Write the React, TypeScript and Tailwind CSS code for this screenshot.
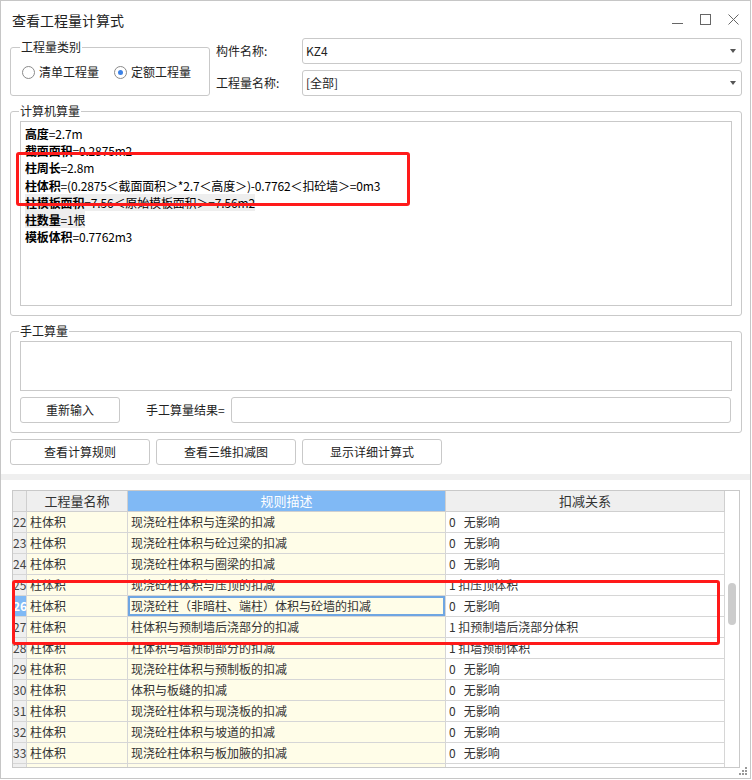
import { ReactNode } from "react";

const rows = [
  { no: 22, name: "柱体积", desc: "现浇砼柱体积与连梁的扣减", rel: "0   无影响" },
  { no: 23, name: "柱体积", desc: "现浇砼柱体积与砼过梁的扣减", rel: "0   无影响" },
  { no: 24, name: "柱体积", desc: "现浇砼柱体积与圈梁的扣减", rel: "0   无影响" },
  { no: 25, name: "柱体积", desc: "现浇砼柱体积与压顶的扣减", rel: "1 扣压顶体积" },
  { no: 26, name: "柱体积", desc: "现浇砼柱（非暗柱、端柱）体积与砼墙的扣减", rel: "0   无影响" },
  { no: 27, name: "柱体积", desc: "柱体积与预制墙后浇部分的扣减", rel: "1 扣预制墙后浇部分体积" },
  { no: 28, name: "柱体积", desc: "柱体积与墙预制部分的扣减", rel: "1 扣墙预制体积" },
  { no: 29, name: "柱体积", desc: "现浇砼柱体积与预制板的扣减", rel: "0   无影响" },
  { no: 30, name: "柱体积", desc: "体积与板缝的扣减", rel: "0   无影响" },
  { no: 31, name: "柱体积", desc: "现浇砼柱体积与现浇板的扣减", rel: "0   无影响" },
  { no: 32, name: "柱体积", desc: "现浇砼柱体积与坡道的扣减", rel: "0   无影响" },
  { no: 33, name: "柱体积", desc: "现浇砼柱体积与板加腋的扣减", rel: "0   无影响" },
];

const formulas: { label: string; value: string; shade?: boolean }[] = [
  { label: "高度", value: "=2.7m" },
  { label: "截面面积", value: "=0.2875m2" },
  { label: "柱周长", value: "=2.8m" },
  { label: "柱体积", value: "=(0.2875＜截面面积＞*2.7＜高度＞)-0.7762＜扣砼墙＞=0m3" },
  { label: "柱模板面积", value: "=7.56＜原始模板面积＞=7.56m2", shade: true },
  { label: "柱数量", value: "=1根", shade: true },
  { label: "模板体积", value: "=0.7762m3" },
];

const Select = ({ value }: { value: string }) => (
  <div className="w-[440px] h-[26px] border border-[#c9c9c9] rounded-[3px] flex items-center justify-between pl-[3px] pr-[5px] text-[12px] text-[#222]">
    <span>{value}</span>
    <svg width="6" height="4" viewBox="0 0 6 4">
      <path d="M0 0 L6 0 L3 4 Z" fill="#555" />
    </svg>
  </div>
);

const Button = ({ children, className = "" }: { children: ReactNode; className?: string }) => (
  <div className={`h-[26px] border border-[#c9c9c9] rounded-[3px] bg-white flex items-center justify-center text-[12px] text-[#222] ${className}`}>
    {children}
  </div>
);

const Radio = ({ checked }: { checked?: boolean }) => (
  <div className="w-[13px] h-[13px] rounded-full border border-[#8a8a8a] bg-white flex items-center justify-center">
    {checked && <div className="w-[5px] h-[5px] rounded-full bg-[#3c82e6]" />}
  </div>
);

export default function App() {
  return (
    <div className="w-[752px] h-[780px] bg-white font-['Noto_Sans_CJK_SC',sans-serif] text-[#222]">
      <div className="relative w-[751px] h-[779px] border border-[#c6c6c6] flex flex-col">
        {/* title bar */}
        <div className="h-[37px] flex items-center justify-between pl-[11px] pr-[11px]">
          <span className="text-[14px] leading-[20px] text-[#222]">查看工程量计算式</span>
          <div className="flex items-center gap-[17px]">
            <svg width="11" height="11" viewBox="0 0 11 11">
              <path d="M0 9.5 H11" stroke="#666" strokeWidth="1" />
            </svg>
            <svg width="11" height="11" viewBox="0 0 11 11">
              <rect x="0.5" y="0.5" width="10" height="10" fill="none" stroke="#666" strokeWidth="1" />
            </svg>
            <svg width="11" height="11" viewBox="0 0 11 11">
              <path d="M0.5 0.5 L10.5 10.5 M10.5 0.5 L0.5 10.5" stroke="#666" strokeWidth="1" />
            </svg>
          </div>
        </div>

        {/* top section */}
        <div className="flex pl-[9px]">
          <fieldset className="mt-[1px] w-[200px] h-[57px] border border-[#c9c9c9] rounded-[3px] pl-[11px]">
            <legend className="-ml-[2px] px-[1px] text-[12px] leading-[16px]">工程量类别</legend>
            <div className="mt-[4px] h-[26px] flex items-center text-[12px]">
              <Radio />
              <span className="ml-[4px]">清单工程量</span>
              <div className="ml-[15px]">
                <Radio checked />
              </div>
              <span className="ml-[4px]">定额工程量</span>
            </div>
          </fieldset>
          <div className="ml-[6px] flex flex-col gap-[6px]">
            <div className="flex items-center">
              <span className="w-[86px] text-[12px]">构件名称:</span>
              <Select value="KZ4" />
            </div>
            <div className="flex items-center">
              <span className="w-[86px] text-[12px]">工程量名称:</span>
              <Select value="[全部]" />
            </div>
          </div>
        </div>

        {/* computer quantity */}
        <fieldset className="mt-[7px] ml-[9px] w-[732px] h-[213px] border border-[#c9c9c9] rounded-[3px] px-[9px]">
          <legend className="-ml-[1px] px-[1px] text-[12px] leading-[16px]">计算机算量</legend>
          <div className="mt-[2px] w-[712px] h-[185px] border border-[#c9c9c9] pl-[4px] pt-[3px] text-[12px] leading-[17.2px] text-black">
            {formulas.map((f) => (
              <div key={f.label} className="tracking-[-0.15px]">
                <span className={f.shade ? "bg-[#eeeeee]" : ""}>
                  <span className="font-bold">{f.label}</span>
                  {f.value}
                </span>
              </div>
            ))}
          </div>
        </fieldset>

        {/* manual quantity */}
        <fieldset className="mt-[7px] ml-[9px] w-[732px] h-[110px] border border-[#c9c9c9] rounded-[3px] px-[9px]">
          <legend className="-ml-[1px] px-[1px] text-[12px] leading-[16px]">手工算量</legend>
          <div className="mt-[2px] w-[712px] h-[50px] border border-[#c9c9c9]" />
          <div className="mt-[6px] flex items-center">
            <Button className="w-[100px]">重新输入</Button>
            <span className="ml-[26px] text-[12px]">手工算量结果=</span>
            <div className="ml-[6px] w-[500px] h-[26px] border border-[#c9c9c9] rounded-[3px]" />
          </div>
        </fieldset>

        {/* action buttons */}
        <div className="mt-[6px] ml-[9px] flex gap-[6px]">
          <Button className="w-[140px]">查看计算规则</Button>
          <Button className="w-[140px]">查看三维扣减图</Button>
          <Button className="w-[140px]">显示详细计算式</Button>
        </div>

        <div className="mt-[9px] h-[6px] bg-[#efefef]" />

        {/* rules table */}
        <div className="mt-[10px] ml-[11px] w-[728px] h-[278px] border border-[#c9c9c9] flex overflow-hidden">
          <div className="flex flex-col">
            <div className="flex h-[21px] shrink-0 border-b border-[#cfcfcf] text-[13px] leading-[20px]">
              <div className="w-[14px] bg-[#ececec] border-r border-[#cfcfcf]" />
              <div className="w-[101px] bg-[#efefef] border-r border-[#cfcfcf] text-center text-[#333]">工程量名称</div>
              <div className="w-[318px] bg-[#80b9f5] border-r border-[#cfcfcf] text-center text-white">规则描述</div>
              <div className="w-[279px] bg-[#efefef] border-r border-[#cfcfcf] text-center text-[#333]">扣减关系</div>
            </div>
            {rows.map((r) => {
              const sel = r.no === 26;
              return (
                <div key={r.no} className="flex h-[21px] shrink-0 border-b border-[#d6d6d6] text-[12px] leading-[20px] text-[#333]">
                  <div
                    className={`w-[14px] border-r border-[#d6d6d6] whitespace-nowrap overflow-visible ${
                      sel ? "bg-[#80b9f5] text-white font-bold" : "bg-[#efefef] text-[#444]"
                    }`}
                  >
                    {r.no}
                  </div>
                  <div className="w-[101px] bg-[#fffde8] border-r border-[#d6d6d6] pl-[3px]">{r.name}</div>
                  <div
                    className={`w-[318px] bg-[#fffde8] border-r border-[#d6d6d6] pl-[3px] whitespace-nowrap ${
                      sel ? "shadow-[inset_0_0_0_2px_#6fa6e2]" : ""
                    }`}
                  >
                    {r.desc}
                  </div>
                  <div className="w-[279px] bg-white border-r border-[#d6d6d6] pl-[3px] whitespace-pre">{r.rel}</div>
                </div>
              );
            })}
            {/* next row, only its top edge shows */}
            <div className="flex h-[21px] shrink-0">
              <div className="w-[14px] bg-[#efefef] border-r border-[#d6d6d6]" />
              <div className="w-[101px] bg-[#fffde8] border-r border-[#d6d6d6]" />
              <div className="w-[318px] bg-[#fffde8] border-r border-[#d6d6d6]" />
              <div className="w-[279px] bg-white border-r border-[#d6d6d6]" />
            </div>
          </div>
          {/* scrollbar */}
          <div className="w-[14px] bg-white flex justify-center">
            <div className="mt-[92px] w-[8px] h-[42px] rounded-[4px] bg-[#cccccc]" />
          </div>
        </div>

        {/* resize grip */}
        <svg className="absolute right-[2px] bottom-[2px]" width="9" height="9" viewBox="0 0 9 9">
          <rect x="6" y="0" width="2" height="2" fill="#999" />
          <rect x="3" y="3" width="2" height="2" fill="#999" />
          <rect x="6" y="3" width="2" height="2" fill="#999" />
          <rect x="0" y="6" width="2" height="2" fill="#999" />
          <rect x="3" y="6" width="2" height="2" fill="#999" />
          <rect x="6" y="6" width="2" height="2" fill="#999" />
        </svg>

        {/* annotation boxes */}
        <div className="absolute left-[15px] top-[151px] w-[394px] h-[54px] border-[3px] border-[#ff1a1a] rounded-[3px]" />
        <div className="absolute left-[11px] top-[579px] w-[708px] h-[65px] border-[3px] border-[#ff1a1a] rounded-[3px]" />
      </div>
    </div>
  );
}
